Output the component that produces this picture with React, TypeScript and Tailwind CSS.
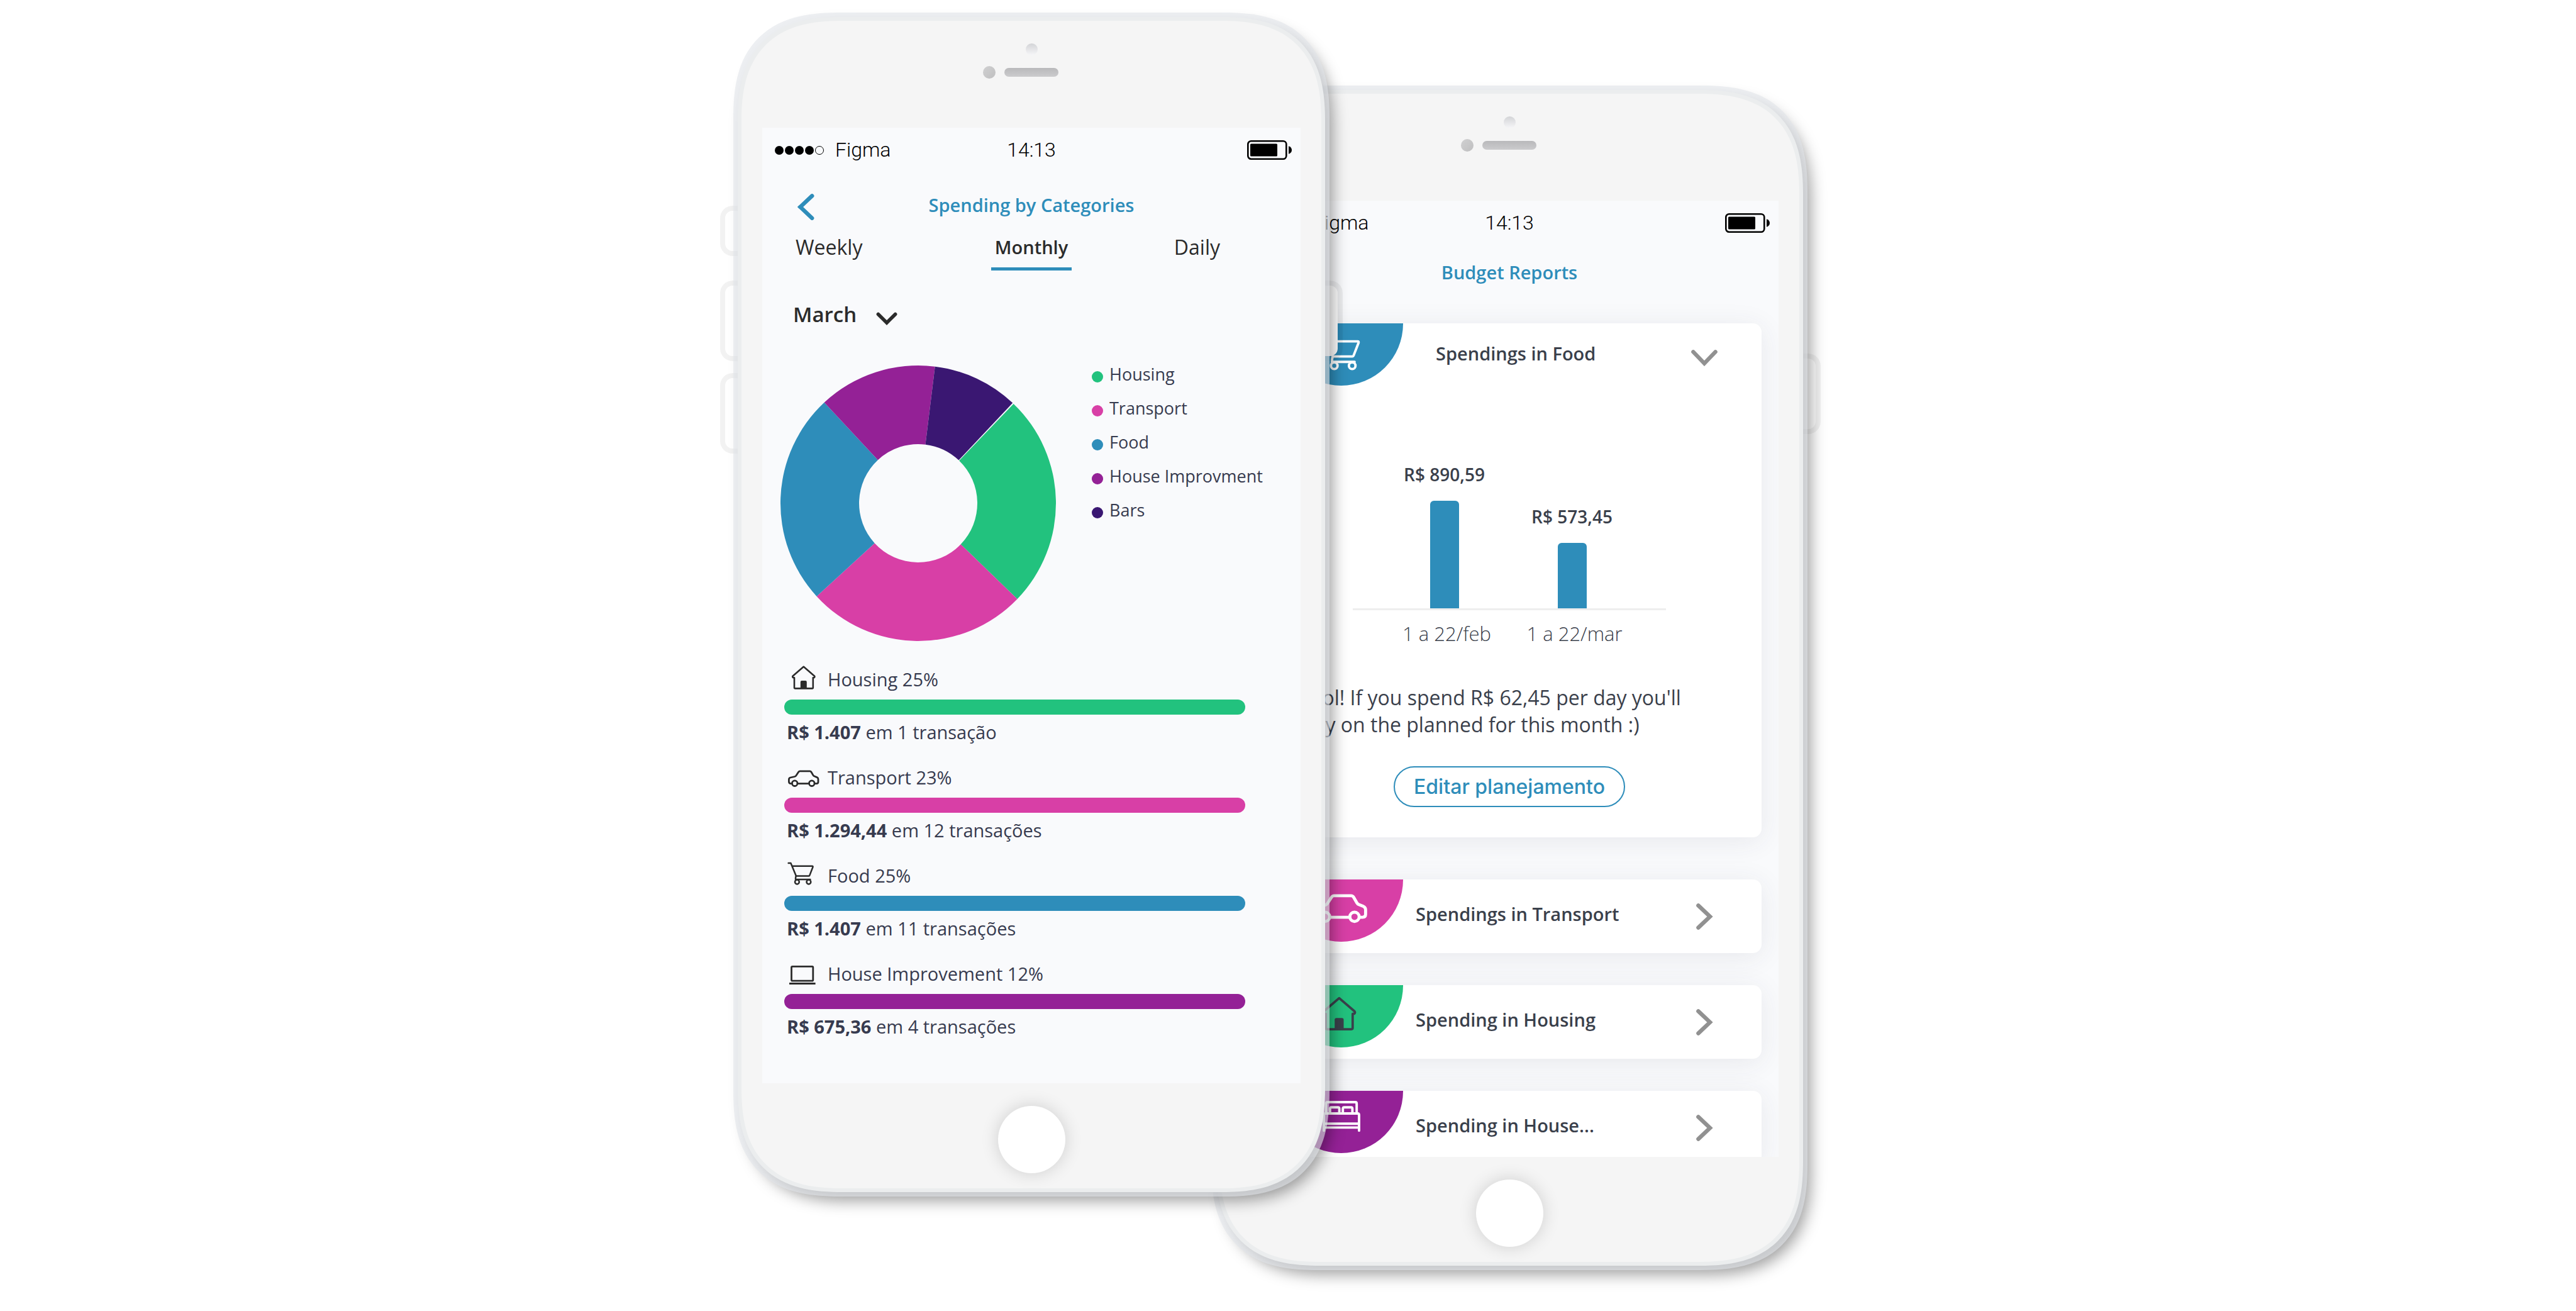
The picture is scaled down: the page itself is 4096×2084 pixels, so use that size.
import React from "react";

const polar = (r: number, deg: number) => {
  const a = (deg * Math.PI) / 180;
  return `${(220 + r * Math.sin(a)).toFixed(2)} ${(220 - r * Math.cos(a)).toFixed(2)}`;
};

const ringSlice = (from: number, to: number, outer = 219, inner = 94) =>
  `M${polar(outer, from)} A${outer} ${outer} 0 0 1 ${polar(outer, to)} L${polar(inner, to)} A${inner} ${inner} 0 0 0 ${polar(inner, from)} Z`;

const slices = [
  { name: "Housing", from: 43.8, to: 134, fill: "#22c27e", dot: "bg-[#22c27e]" },
  { name: "Transport", from: 134, to: 227.5, fill: "#d83fa6", dot: "bg-[#d83fa6]" },
  { name: "Food", from: 227.5, to: 317, fill: "#2e8dba", dot: "bg-[#2e8dba]" },
  { name: "House Improvment", from: 317, to: 367, fill: "#942196", dot: "bg-[#942196]" },
  { name: "Bars", from: 7, to: 43.3, fill: "#3a1772", dot: "bg-[#3a1772]" },
];

function HouseShape() {
  return (
    <g fill="none" stroke="currentColor" strokeWidth="2.6" strokeLinejoin="round" strokeLinecap="round">
      <path d="M12 21.2H10Q8.6 19.8 9.8 18.4L26.8 3.8L43.8 18.4Q45 19.8 43.6 21.2H41.8V37Q41.8 38.4 40.4 38.4H13.4Q12 38.4 12 37Z" />
      <path d="M21.8 38.4V28Q21.8 26 23.8 26H29.8Q31.8 26 31.8 28V38.4Z" fill="currentColor" stroke="none" />
    </g>
  );
}

function CarShape() {
  return (
    <g fill="none" stroke="currentColor" strokeWidth="2.8" strokeLinejoin="round" strokeLinecap="round">
      <path d="M8.3 33.6H6Q3.4 33.2 3.4 30.5V27Q3.4 24.6 6 24L12.6 22.5Q14 22.1 14.8 21L18.6 15.2Q19.5 13.8 21 13.8H36.6Q38.2 13.8 39 15.2L42 20.4Q42.6 21.4 43.6 21.8L48 23.6Q50 24.6 50 26.6V31Q50 33.6 47.2 33.6H44.2M17.1 33.6H35.4" />
      <circle cx="12.7" cy="33.2" r="4.3" />
      <circle cx="39.8" cy="33.2" r="4.3" />
    </g>
  );
}

function CartShape() {
  return (
    <g fill="none" stroke="currentColor" strokeWidth="2.5" strokeLinejoin="round" strokeLinecap="round">
      <path d="M2.6 3.9H6.4L14.9 24.4H35.2Q36 24.4 36.3 23.6L41.5 10.2Q41.8 8.8 40.6 8.8H8.6" />
      <path d="M14.9 24.4Q13.6 27 14.2 31M15 30H37.4" />
      <circle cx="16.4" cy="34" r="3.4" />
      <circle cx="34.9" cy="34" r="3.4" />
    </g>
  );
}

function LaptopShape() {
  return (
    <g fill="none" stroke="currentColor" strokeWidth="2.8">
      <rect x="7.5" y="12.4" width="34.3" height="22.8" rx="1.4" />
      <path d="M4 39.6H45.6" strokeWidth="3" />
    </g>
  );
}

function Icon({ view, className, children }: { view: string; className: string; children: React.ReactNode }) {
  return (
    <svg viewBox={view} className={className} aria-hidden="true">
      {children}
    </svg>
  );
}

function BedIcon() {
  return (
    <svg viewBox="0 0 60 50" className="h-[50px] w-[60px]" fill="none" stroke="currentColor" strokeWidth="3.9" strokeLinecap="round" aria-hidden="true">
      <path d="M5.5 19V4.5Q5.5 2 8 2H52Q54.2 2 54.2 4.5V19" />
      <path d="M11.8 19V12.5Q11.8 10.2 14 10.2H24.4Q26.6 10.2 26.6 12.5V19M32.2 19V12.5Q32.2 10.2 34.4 10.2H45.2Q47.4 10.2 47.4 12.5V19" />
      <path d="M2 47.2V22.4Q2 20 4.4 20H55.6Q58 20 58 22.4V47.2M2 36.3H58M2 42.4H58" />
    </svg>
  );
}

function Battery() {
  return (
    <svg viewBox="0 0 71 31" className="h-[31px] w-[71px]" role="img" aria-label="Battery">
      <rect x="1.3" y="1.3" width="61" height="28.4" rx="5" fill="none" stroke="#000" strokeWidth="2.6" />
      <rect x="5" y="5.5" width="43" height="20" rx="1.5" />
      <path d="M66 9.3Q71 11 71 15.5Q71 20 66 21.7Z" />
    </svg>
  );
}

function StatusBar() {
  return (
    <div className="grid h-10 grid-cols-3 items-center px-3.5 font-['Roboto',sans-serif] text-[32px] leading-10 font-light text-black">
      <div className="flex items-center gap-[18px] pl-1.5">
        <div className="flex gap-0.5 pt-0.5" aria-hidden="true">
          <span className="size-3.5 rounded-full bg-black" />
          <span className="size-3.5 rounded-full bg-black" />
          <span className="size-3.5 rounded-full bg-black" />
          <span className="size-3.5 rounded-full bg-black" />
          <span className="size-3.5 rounded-full border border-black" />
        </div>
        <span>Figma</span>
      </div>
      <span className="text-center">14:13</span>
      <div className="flex justify-end">
        <Battery />
      </div>
    </div>
  );
}

function SideKey({ className }: { className: string }) {
  return (
    <span
      className={`absolute w-20 rounded-[20px] border-8 border-black/5 bg-white bg-clip-padding ${className}`}
      aria-hidden="true"
    />
  );
}

function Phone({ className, label, children }: { className: string; label: string; children: React.ReactNode }) {
  return (
    <section aria-label={label} className={`w-full max-w-[934px] ${className}`}>
      <SideKey className="top-[300px] -left-7 h-20" />
      <SideKey className="top-[419px] -left-7 h-32" />
      <SideKey className="top-[566px] -left-7 h-32" />
      <SideKey className="top-[419px] -right-7 h-32" />
      <div className="relative rounded-[137px] border-[6px] border-[#ebedee] bg-[#f5f5f5] px-[33px] shadow-[0_0_0_7px_rgba(225,229,234,0.6),12px_14px_24px_rgba(0,0,0,0.38)] supports-[corner-shape:squircle]:rounded-[168px] supports-[corner-shape:squircle]:[corner-shape:superellipse(1.36)]">
        <div className="flex flex-col items-center gap-[17px] pt-9 pb-[78px]">
          <span className="size-[19px] rounded-full bg-linear-to-b from-[#d3d4d7] to-[#f6f6f8]" />
          <div className="grid w-full grid-cols-[1fr_auto_1fr] items-center">
            <span className="mr-3.5 size-5 justify-self-end rounded-full bg-linear-to-br from-[#d0d0d1] to-[#bfbfc0]" />
            <span className="h-3.5 w-[86px] rounded-full bg-linear-to-b from-[#b9b9bb] to-[#cbcbcd]" />
          </div>
        </div>
        <div className="flow-root overflow-hidden bg-[#f9fafc] pt-[15px]">
          <StatusBar />
          {children}
        </div>
        <div className="flex justify-center pt-9 pb-6">
          <button type="button" aria-label="Home" className="size-[107px] rounded-full bg-white shadow-[0_0_28px_rgba(0,0,0,0.16)]" />
        </div>
      </div>
    </section>
  );
}

const spendings = [
  { name: "Housing 25%", bar: "bg-[#22c27e]", amount: "R$ 1.407", rest: "em 1 transação", shape: <HouseShape /> },
  { name: "Transport 23%", bar: "bg-[#d83fa6]", amount: "R$ 1.294,44", rest: "em 12 transações", shape: <CarShape /> },
  { name: "Food 25%", bar: "bg-[#2e8dba]", amount: "R$ 1.407", rest: "em 11 transações", shape: <CartShape /> },
  { name: "House Improvement 12%", bar: "bg-[#942196]", amount: "R$ 675,36", rest: "em 4 transações", shape: <LaptopShape /> },
];

function SpendingScreen() {
  return (
    <>
      <header className="mt-11 grid grid-cols-[1fr_auto_1fr] items-center px-14">
        <button type="button" aria-label="Back" className="justify-self-start text-[#2e8dba]">
          <svg viewBox="0 0 27 48" className="h-12 w-[27px]" fill="none" stroke="currentColor" strokeWidth="6.4" strokeLinecap="round" aria-hidden="true">
            <path d="M23.2 9.4L4.5 27L23.2 44.8" />
          </svg>
        </button>
        <h1 className="text-[29px] leading-10 font-semibold text-[#2e8dba]">Spending by Categories</h1>
      </header>
      <nav className="mt-[21px] grid grid-cols-[1fr_auto_1fr] items-start text-[#2b2b2b]">
        <button type="button" className="justify-self-start pl-[53px] text-[32px] leading-[44px]">Weekly</button>
        <button type="button" aria-current="page" className="border-b-[5px] border-[#2e8dba] px-1.5 pb-2.5 text-[29px] leading-[44px] font-semibold">
          Monthly
        </button>
        <button type="button" className="justify-self-end pr-32 text-[32px] leading-[44px]">Daily</button>
      </nav>
      <label className="mt-12 flex items-center gap-[30px] pl-[49px] text-[#2b2b2b]">
        <select aria-label="Month" className="appearance-none bg-transparent text-[33px] leading-[44px] font-semibold" defaultValue="March">
          <option>March</option>
          <option>April</option>
          <option>May</option>
        </select>
        <svg viewBox="0 0 34 21" className="mt-3 h-[21px] w-[34px]" fill="none" stroke="currentColor" strokeWidth="5.6" strokeLinecap="round" aria-hidden="true">
          <path d="M3.4 3.4L17 17L30.6 3.4" />
        </svg>
      </label>
      <div className="mt-[58px] flex items-start gap-14 pl-7">
        <svg viewBox="0 0 440 440" className="h-[440px] w-[440px] shrink-0" role="img" aria-label="Spending share by category">
          {slices.map((s) => (
            <path key={s.name} d={ringSlice(s.from, s.to)} fill={s.fill} />
          ))}
        </svg>
        <ul className="flex flex-col gap-6 text-[27px] leading-[30px] text-[#373b4f]">
          {slices.map((s) => (
            <li key={s.name} className="flex items-center gap-2.5 whitespace-nowrap">
              <span className={`mt-2 size-[18px] rounded-full ${s.dot}`} />
              {s.name}
            </li>
          ))}
        </ul>
      </div>
      <ul className="mt-9 flex flex-col gap-7 pr-[88px] pb-[70px] pl-[35px] text-[29px] leading-10 text-[#373b4f]">
        {spendings.map((s) => (
          <li key={s.name}>
            <div className="flex items-center gap-3 pl-1">
              <Icon view="0 0 53 48" className="h-12 w-[53px] text-[#2b2b2b]">{s.shape}</Icon>
              <span>{s.name}</span>
            </div>
            <div className={`mt-2 h-6 rounded-full ${s.bar}`} />
            <p className="mt-2 pl-1">
              <strong className="font-bold">{s.amount}</strong> {s.rest}
            </p>
          </li>
        ))}
      </ul>
    </>
  );
}

function Badge({ className, children }: { className: string; children: React.ReactNode }) {
  return (
    <span className={`ml-[35px] flex h-[99px] w-[197px] shrink-0 items-start justify-center self-start rounded-b-full ${className}`}>
      {children}
    </span>
  );
}

function ChevronRight() {
  return (
    <svg viewBox="0 0 42 42" className="size-[42px]" fill="none" stroke="#919191" strokeWidth="6.4" strokeLinecap="round" aria-hidden="true">
      <path d="M11.4 3.4L30 21L11.4 38.6" />
    </svg>
  );
}

const reports = [
  {
    name: "Spendings in Transport",
    badge: "bg-[#d83fa6] pt-0.5 text-white",
    icon: <Icon view="0 0 55 48" className="h-[83px] w-[95px]"><CarShape /></Icon>,
  },
  {
    name: "Spending in Housing",
    badge: "bg-[#22c27e] pt-[15px] text-[#3a404b]",
    icon: <Icon view="0 0 58 48" className="h-[69px] w-[83px]"><HouseShape /></Icon>,
  },
  {
    name: "Spending in House...",
    badge: "bg-[#942196] pt-4 text-white",
    icon: <BedIcon />,
  },
];

const months = [
  { value: "R$ 890,59", label: "1 a 22/feb", bar: "h-[171px]" },
  { value: "R$ 573,45", label: "1 a 22/mar", bar: "h-[104px]" },
];

function BudgetScreen() {
  return (
    <>
      <h1 className="mt-[37px] text-center text-[29px] leading-[44px] font-semibold text-[#2e8dba]">Budget Reports</h1>
      <div className="mt-[59px] px-[27px] text-[#3a404b]">
        <article className="rounded-[14px] bg-white pb-12 shadow-[0_6px_44px_rgba(50,60,80,0.09)]">
          <button type="button" aria-expanded="true" className="flex w-full items-center pr-[70px] text-left">
            <Badge className="bg-[#2e8dba] pt-[15px] text-white">
              <Icon view="0 0 47 48" className="h-[74px] w-[73px]"><CartShape /></Icon>
            </Badge>
            <span className="ml-[52px] flex-1 pb-1 text-[29px] leading-10 font-semibold">Spendings in Food</span>
            <svg viewBox="0 0 42 26" className="mt-2.5 h-[26px] w-[42px]" fill="none" stroke="#919191" strokeWidth="6.4" strokeLinecap="round" aria-hidden="true">
              <path d="M3.4 3.4L21 21.6L38.6 3.4" />
            </svg>
          </button>
          <div className="mt-[121px] ml-[152px] w-[498px]">
            <div className="flex items-end border-b-[3px] border-[#eeeeee] pl-11">
              {months.map((m) => (
                <div key={m.label} className="flex w-[203px] flex-col items-center gap-[22px]">
                  <span className="text-[28px] leading-10 font-semibold">{m.value}</span>
                  <span className={`w-[46px] rounded-t-md bg-[#2e8dba] ${m.bar}`} />
                </div>
              ))}
            </div>
            <div className="mt-[17px] flex pl-12 text-[31px] leading-10 font-light">
              {months.map((m) => (
                <span key={m.label} className="w-[203px] text-center">{m.label}</span>
              ))}
            </div>
          </div>
          <p className="mt-[60px] pr-16 pl-16 text-[32px] leading-[43px]">
            Cool! If you spend R$ 62,45 per day you'll stay on the planned for this month :)
          </p>
          <div className="mt-[45px] flex justify-center">
            <button type="button" className="h-[65px] rounded-full border-2 border-[#2e8dba] px-[30px] text-[32px] leading-10 font-medium text-[#2e8dba] font-['Inter',sans-serif]">
              Editar planejamento
            </button>
          </div>
        </article>
        <ul className="mt-[67px] -mb-3 flex flex-col gap-[51px]">
          {reports.map((r) => (
            <li key={r.name} className="rounded-[14px] bg-white shadow-[0_6px_44px_rgba(50,60,80,0.09)]">
              <button type="button" className="flex h-[117px] w-full items-center pr-[70px] text-left">
                <Badge className={r.badge}>{r.icon}</Badge>
                <span className="ml-5 flex-1 pb-2 text-[29px] leading-10 font-semibold">{r.name}</span>
                <ChevronRight />
              </button>
            </li>
          ))}
        </ul>
      </div>
    </>
  );
}

export default function App() {
  return (
    <main className="flex min-h-screen items-start justify-center overflow-hidden bg-white pt-[27px] pr-14 font-['Open_Sans',sans-serif]">
      <Phone label="Spending by categories" className="relative z-10">
        <SpendingScreen />
      </Phone>
      <Phone label="Budget reports" className="relative mt-[116px] -ml-[174px]">
        <BudgetScreen />
      </Phone>
    </main>
  );
}
